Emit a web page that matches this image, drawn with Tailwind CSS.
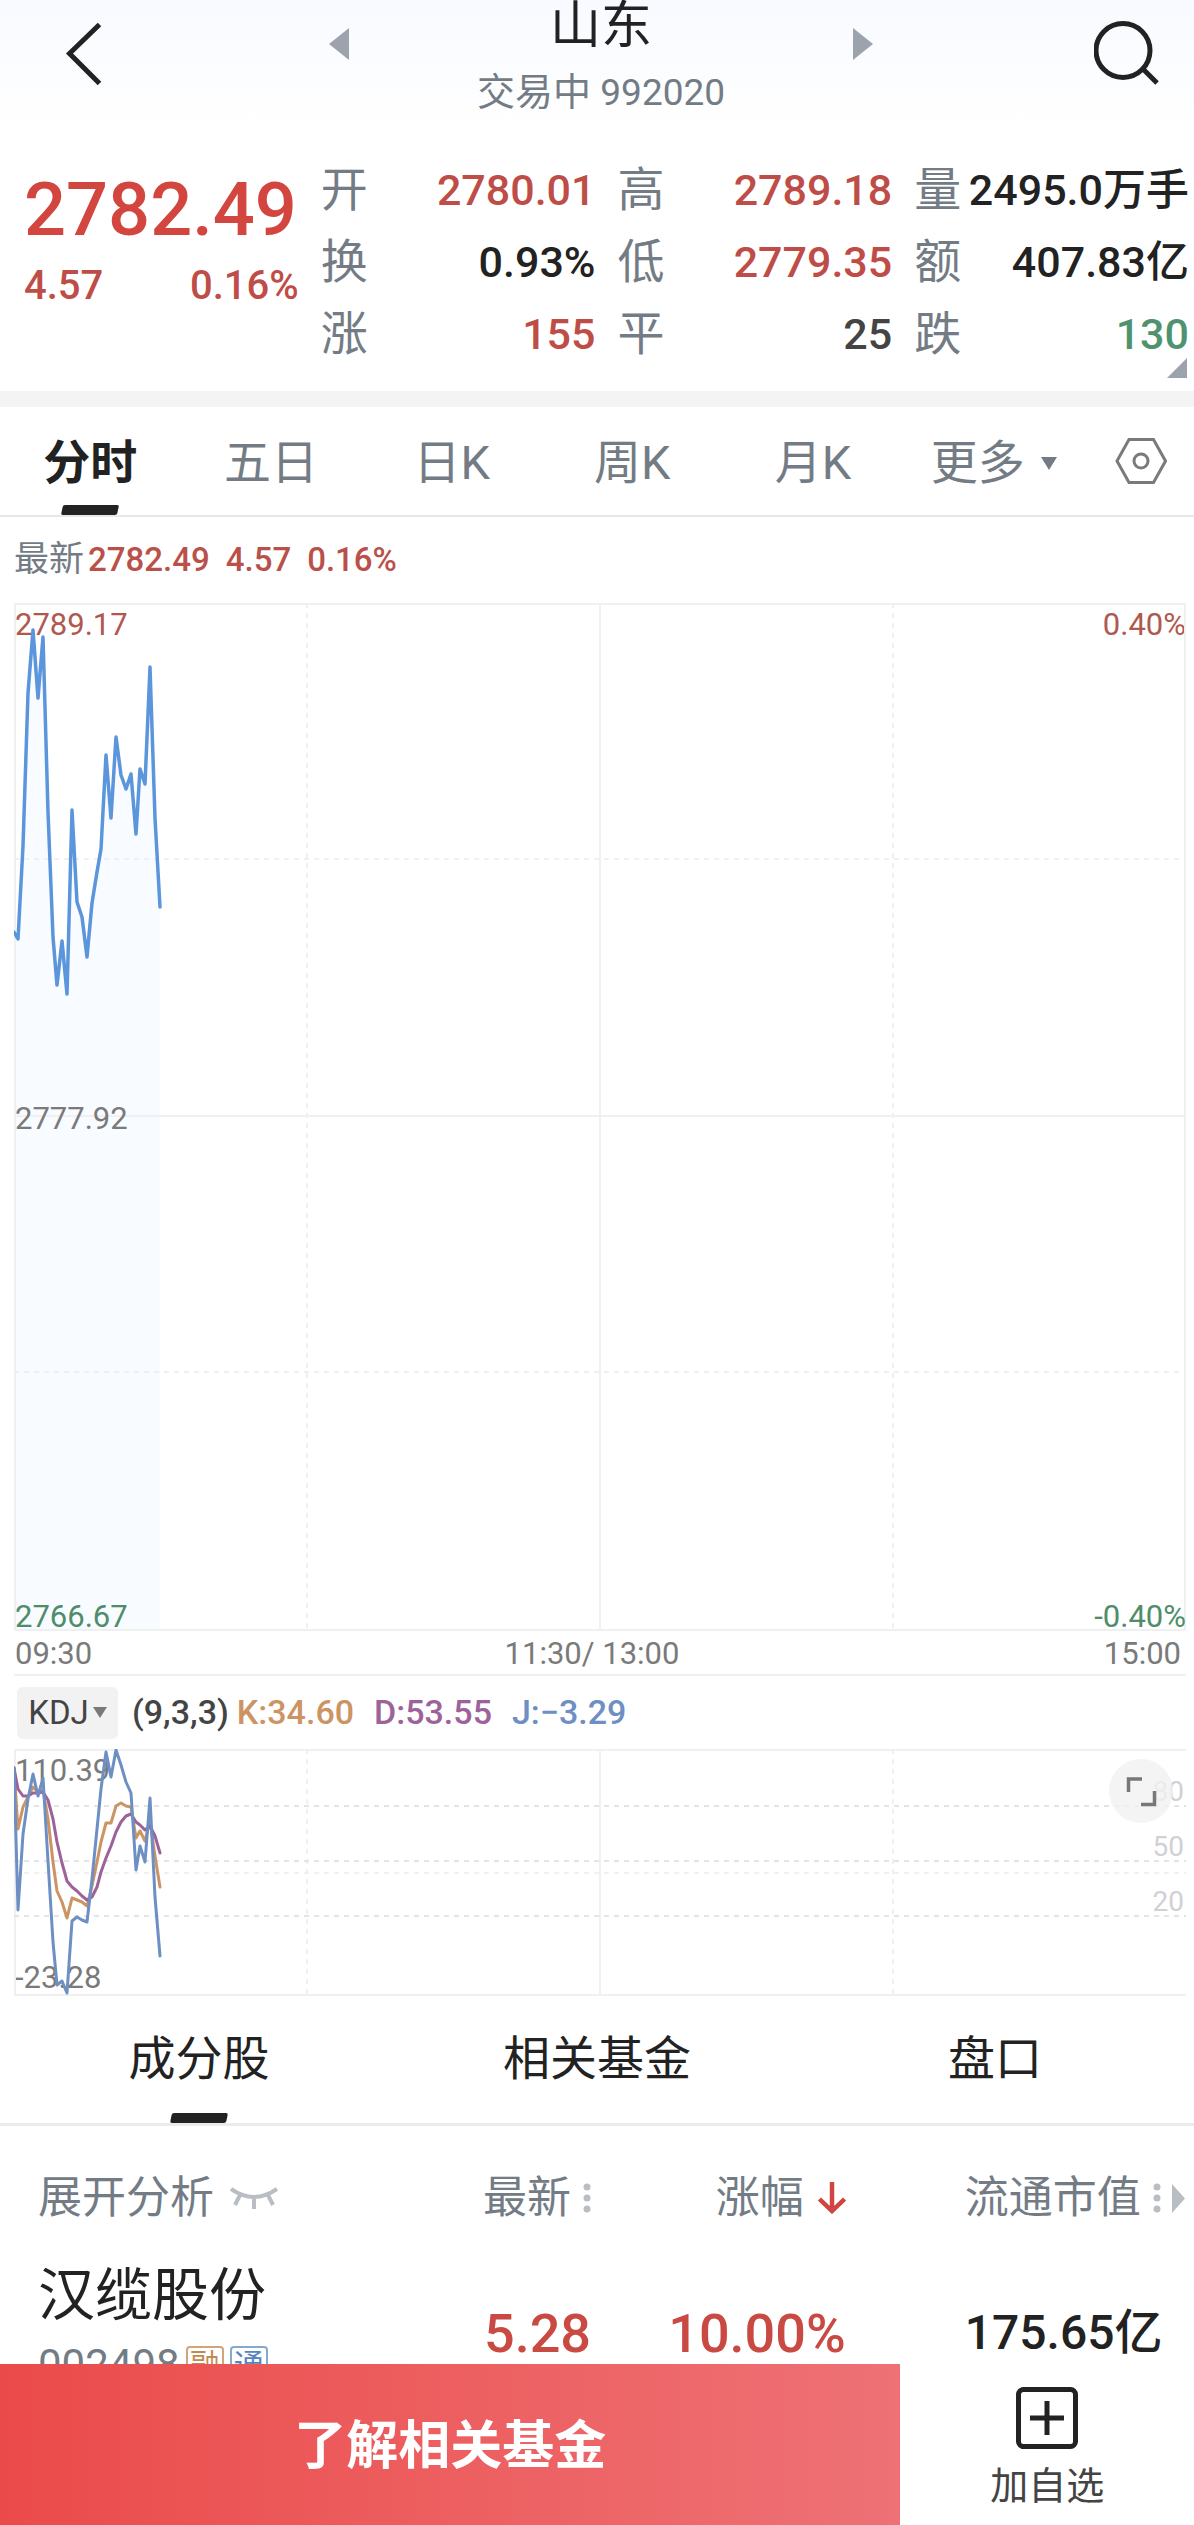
<!DOCTYPE html>
<html lang="zh-CN">
<head>
    <meta charset="UTF-8">
    <meta name="viewport" content="width=device-width, initial-scale=1.0">
    <title>山东 992020</title>
    <script src="https://cdn.jsdelivr.net/npm/@tailwindcss/browser@4"></script>
</head>
<body class="bg-white text-[#222] font-['Roboto','Noto_Sans_CJK_SC',sans-serif]">

    <!-- Header -->
    <header class="h-[130px] flex items-start justify-between bg-linear-to-b from-[#f8faff] to-white">
        <button aria-label="返回" class="ml-[60px] mt-[18px]">
            <svg class="w-12 h-[70px]" viewBox="0 0 48 70" fill="none" stroke="#222" stroke-width="5"><path d="M39.5 6.5 9.5 35.5 39.5 65.5"/></svg>
        </button>
        <div class="flex items-start">
            <button aria-label="上一个" class="mt-7">
                <svg class="w-5 h-8" viewBox="0 0 20 32" fill="#9da3ad"><path d="M20 0V32L0 16Z"/></svg>
            </button>
            <div class="w-[504px] text-center">
                <h1 class="text-[51px] leading-[52px]">山东</h1>
                <p class="mt-4 text-[38px] leading-12 text-[#737c85]">交易中 <span class="text-[37px]">992020</span></p>
            </div>
            <button aria-label="下一个" class="mt-7">
                <svg class="w-5 h-8" viewBox="0 0 20 32" fill="#9da3ad"><path d="M0 0V32L20 16Z"/></svg>
            </button>
        </div>
        <button aria-label="搜索" class="mr-[30px] mt-[18px]">
            <svg class="w-[70px] h-[70px]" viewBox="0 0 70 70" fill="none" stroke="#222" stroke-width="5"><circle cx="29" cy="32.500" r="27"/><path d="M49 51 63 65"/></svg>
        </button>
    </header>

    <!-- Quote -->
    <section class="relative grid grid-cols-4 gap-[22px] pl-6 pr-[5px] pt-6 pb-[21px] text-[43px] leading-[72px] font-medium whitespace-nowrap">
        <div class="pt-5 text-[#bf4d47]">
            <div class="text-[74px] text-[#d2463f]">2782.49</div>
            <div class="flex justify-between text-[40px] pt-1"><span>4.57</span><span>0.16%</span></div>
        </div>
        <dl>
            <div class="flex justify-between"><dt class="text-[47px] font-normal text-[#737c85]">开</dt><dd class="text-[#bf4d47]">2780.01</dd></div>
            <div class="flex justify-between"><dt class="text-[47px] font-normal text-[#737c85]">换</dt><dd>0.93%</dd></div>
            <div class="flex justify-between"><dt class="text-[47px] font-normal text-[#737c85]">涨</dt><dd class="text-[#bf4d47]">155</dd></div>
        </dl>
        <dl>
            <div class="flex justify-between"><dt class="text-[47px] font-normal text-[#737c85]">高</dt><dd class="text-[#bf4d47]">2789.18</dd></div>
            <div class="flex justify-between"><dt class="text-[47px] font-normal text-[#737c85]">低</dt><dd class="text-[#bf4d47]">2779.35</dd></div>
            <div class="flex justify-between"><dt class="text-[47px] font-normal text-[#737c85]">平</dt><dd class="text-[#444]">25</dd></div>
        </dl>
        <dl>
            <div class="flex justify-between"><dt class="text-[47px] font-normal text-[#737c85]">量</dt><dd>2495.0万手</dd></div>
            <div class="flex justify-between"><dt class="text-[47px] font-normal text-[#737c85]">额</dt><dd>407.83亿</dd></div>
            <div class="flex justify-between"><dt class="text-[47px] font-normal text-[#737c85]">跌</dt><dd class="text-[#4e936d]">130</dd></div>
        </dl>
        <svg class="absolute right-[7px] bottom-[13px] w-5 h-5" viewBox="0 0 20 20" fill="#9da3ad"><path d="M20 0V20H0Z"/></svg>
    </section>

    <div class="h-4 bg-[#f4f4f4]"></div>

    <!-- Period tabs -->
    <nav class="flex h-[110px] border-b-2 border-[#e8e8e8] text-[47px] text-[#737c85]">
        <button class="relative flex-1 pt-1 font-bold text-[#222]">分时
            <span class="absolute bottom-0 left-1/2 -translate-x-1/2 -skew-x-12 w-14 h-[10px] rounded-xs bg-[#222]"></span>
        </button>
        <button class="flex-1 pt-1">五日</button>
        <button class="flex-1 pt-1">日K</button>
        <button class="flex-1 pt-1">周K</button>
        <button class="flex-1 pt-1">月K</button>
        <button class="flex-1 flex items-center justify-center gap-4 pt-1 pr-1">更多
            <svg class="w-4 h-[13px]" viewBox="0 0 16 13" fill="#737c85"><path d="M0 0H16L8 13Z"/></svg>
        </button>
        <button aria-label="设置" class="w-[106px] flex items-center justify-center">
            <svg class="w-[52px] h-12" viewBox="0 0 52 48" fill="none" stroke="#7a7a7a" stroke-width="3"><path d="M14 2.500H38.500L50.500 24 38.500 45.500H14L2 24Z"/><circle cx="26" cy="24" r="7"/></svg>
        </button>
    </nav>

    <!-- Intraday chart -->
    <section class="pl-[14px] pr-2">
        <div class="flex items-center h-[86px] gap-4 text-[33px] font-medium text-[#b9504a]">
            <span><span class="text-[35px] font-normal text-[#737c85] mr-1">最新</span>2782.49</span><span>4.57</span><span>0.16%</span>
        </div>
        <div class="relative h-[1028px] text-[31px] leading-9 text-[#7a7a7a]">
            <span class="absolute top-1 left-px text-[#b05850]">2789.17</span>
            <span class="absolute top-1 right-0 text-[#b05850]">0.40%</span>
            <svg class="absolute inset-0 w-full h-full" viewBox="0 0 1172 1028" preserveAspectRatio="none" fill="none">
                <path fill="#f8fbff" d="M0 329 4 336 9 243 14 90 19 27 24 95 29 34 34 209 39 334 43 382 48 338 53 391 58 207 63 299 68 314 73 354 78 300 83 269 87 246 92 152 97 215 102 134 107 172 112 186 117 171 122 231 126 166 131 181 136 64 141 215 146 304V1028H0Z"/>
                <g stroke="#f0f0f0" stroke-width="2">
                    <path d="M0 1H1172M0 1027H1172M1 0V1028M1171 0V1028M0 513H1172M586 0V1028"/>
                    <path stroke-dasharray="5 5" d="M0 256H1172M0 769H1172M293 0V1028M879 0V1028"/>
                </g>
                <polyline stroke="#5b95db" stroke-width="3.500" stroke-linejoin="round" stroke-linecap="round" points="0,329 4,336 9,243 14,90 19,27 24,95 29,34 34,209 39,334 43,382 48,338 53,391 58,207 63,299 68,314 73,354 78,300 83,269 87,246 92,152 97,215 102,134 107,172 112,186 117,171 122,231 126,166 131,181 136,64 141,215 146,304"/>
            </svg>
            <span class="absolute top-[498px] left-px">2777.92</span>
            <span class="absolute -bottom-1 left-px text-[#4e8c6a]">2766.67</span>
            <span class="absolute -bottom-1 right-0 text-[#4e8c6a]">-0.40%</span>
        </div>
        <div class="grid grid-cols-3 items-center h-[45px] px-px border-b-2 border-[#f0f0f0] text-[31px] text-[#7a7a7a]">
            <span>09:30</span><span class="text-center pr-4">11:30/ 13:00</span><span class="text-right pr-1">15:00</span>
        </div>
    </section>

    <!-- KDJ indicator -->
    <section class="pl-[14px] pr-2">
        <div class="flex items-center h-[73px] pl-[3px] text-[34px] font-medium whitespace-nowrap">
            <button class="flex items-center justify-center w-[101px] h-[52px] mr-[14px] rounded-md bg-[#f2f2f2] text-[33px] font-normal text-[#444]">KDJ
                <svg class="ml-1 w-[14px] h-[11px]" viewBox="0 0 14 11" fill="#7a7a7a"><path d="M0 0H14L7 11Z"/></svg>
            </button>
            <span class="mr-2 text-[#444]">(9,3,3)</span>
            <span class="mr-5 text-[#cc9463]">K:34.60</span>
            <span class="mr-5 text-[#9b6399]">D:53.55</span>
            <span class="text-[#6d8fc4]">J:−3.29</span>
        </div>
        <div class="relative h-[247px] text-[31px] leading-9 text-[#7a7a7a]">
            <span class="absolute top-1 left-px">110.39</span>
            <span class="absolute bottom-0 left-px">-23.28</span>
            <span class="absolute top-[25px] right-[2px] text-[28px] text-[#cfd1d5]">80</span>
            <span class="absolute top-[80px] right-[2px] text-[28px] text-[#cfd1d5]">50</span>
            <span class="absolute top-[135px] right-[2px] text-[28px] text-[#cfd1d5]">20</span>
            <svg class="absolute inset-0 w-full h-full" viewBox="0 0 1172 247" preserveAspectRatio="none" fill="none">
                <g stroke="#f0f0f0" stroke-width="2">
                    <path d="M0 1H1172M0 246H1172M1 0V247M586 0V247"/>
                    <path stroke-dasharray="5 5" d="M0 124H1172M293 0V247M879 0V247"/>
                    <path stroke="#e4e4e4" stroke-dasharray="5 5" d="M0 57H1172M0 112H1172M0 167H1172"/>
                </g>
                <g stroke-width="3" stroke-linejoin="round" stroke-linecap="round">
                    <polyline stroke="#cc9463" points="0,19 4,80 9,58 14,48 19,38 24,43 29,41 34,70 39,113 43,142 48,153 53,169 58,149 63,151 68,153 73,157 78,137 83,113 87,93 92,74 97,74 102,57 107,54 112,57 117,58 122,89 126,82 131,92 136,72 141,107 146,138"/>
                    <polyline stroke="#9b6399" points="0,19 4,40 9,47 14,47 19,44 24,44 29,43 34,51 39,70 43,93 48,114 53,132 58,138 63,142 68,147 73,151 78,148 83,138 87,123 92,109 97,97 102,83 107,73 112,67 117,65 122,73 126,76 131,81 136,77 141,87 146,104"/>
                    <polyline stroke="#6d8fc4" points="0,19 4,161 9,85 14,50 19,25 24,47 29,29 34,112 39,193 43,236 48,232 53,244 58,172 63,168 68,171 73,173 78,130 83,80 87,40 92,3 97,28 102,1 107,16 112,33 117,44 122,121 126,97 131,113 136,49 141,148 146,207"/>
                </g>
            </svg>
            <button aria-label="全屏" class="absolute top-[10px] right-[13px] w-16 h-16 rounded-full bg-[#f1f1f1]/80">
                <svg class="w-16 h-16" viewBox="0 0 64 64" fill="none" stroke="#777" stroke-width="3.500"><path d="M33 20H19.500V33M32 45.500H45.500V32"/></svg>
            </button>
        </div>
    </section>

    <!-- Content tabs -->
    <nav class="grid grid-cols-3 h-[130px] border-b-3 border-[#ebebeb] text-[47px]">
        <button class="relative">成分股
            <span class="absolute bottom-0 left-1/2 -translate-x-1/2 -skew-x-12 w-14 h-[10px] rounded-xs bg-[#222]"></span>
        </button>
        <button>相关基金</button>
        <button>盘口</button>
    </nav>

    <!-- Stocks -->
    <table class="w-full table-fixed whitespace-nowrap">
        <thead>
            <tr class="h-[144px] text-[44px] text-[#737c85]">
                <th class="w-[30%] pl-[38px] text-left font-normal">
                    <button class="flex items-center gap-4">展开分析
                        <svg class="w-12 h-6" viewBox="0 0 48 24" fill="none" stroke="#b9bec4" stroke-width="4"><path d="M1 3Q24 19 47 3M10 9 5 19M24 11V23M38 9 43 19"/></svg>
                    </button>
                </th>
                <th class="w-[19.500%] font-normal">
                    <button class="flex items-center gap-3 ml-auto">最新
                        <svg class="w-2 h-[30px]" viewBox="0 0 8 30" fill="#b9bec4"><circle cx="4" cy="4" r="3.500"/><circle cx="4" cy="15" r="3.500"/><circle cx="4" cy="26" r="3.500"/></svg>
                    </button>
                </th>
                <th class="w-[21.500%] pr-[2px] font-normal">
                    <button class="flex items-center gap-[14px] ml-auto">涨幅
                        <svg class="w-7 h-8" viewBox="0 0 28 32" fill="none" stroke="#cf453f" stroke-width="4.500"><path d="M14 0V29M1.500 17 14 29 26.500 17"/></svg>
                    </button>
                </th>
                <th class="pl-[117px] font-normal">
                    <button class="flex items-center gap-3">流通市值
                        <svg class="w-8 h-[30px]" viewBox="0 0 32 30" fill="#b9bec4"><circle cx="4" cy="4" r="3.500"/><circle cx="4" cy="15" r="3.500"/><circle cx="4" cy="26" r="3.500"/><path d="M19 1V30L32 15.500Z"/></svg>
                    </button>
                </th>
            </tr>
        </thead>
        <tbody>
            <tr class="h-[126px] text-[54px] font-medium">
                <td class="pl-[38px] align-top">
                    <a href="#" class="block text-[57px] leading-[52px] font-normal">汉缆股份</a>
                    <div class="flex items-center gap-[6px] mt-[18px] text-[42px] leading-[50px] font-normal text-[#737c85]">002498
                        <span class="w-[38px] h-[38px] rounded-sm border-2 border-[#cfa67a] text-[30px] leading-[34px] text-center text-[#c28a50]">融</span>
                        <span class="w-[38px] h-[38px] rounded-sm border-2 border-[#86a9cf] text-[30px] leading-[34px] text-center text-[#5585c0]">通</span>
                    </div>
                </td>
                <td class="text-right text-[#c94a43]">5.28</td>
                <td class="pr-[2px] text-right text-[#c94a43]">10.00%</td>
                <td class="pl-[117px] text-[48px]">175.65亿</td>
            </tr>
        </tbody>
    </table>

    <!-- Bottom bar -->
    <footer class="fixed inset-x-0 bottom-0 flex h-[161px] bg-white">
        <button class="w-[75.400%] pt-1 bg-linear-to-r from-[#eb4a4a] to-[#ee7175] text-[52px] font-bold text-white">了解相关基金</button>
        <button class="flex-1 flex flex-col items-center pt-[23px] text-[38px] leading-[46px] text-[#444]">
            <svg class="w-[62px] h-[62px] mb-[14px]" viewBox="0 0 62 62" fill="none" stroke="#222" stroke-width="5"><rect x="2.500" y="2.500" width="57" height="57" rx="5"/><path d="M31 14V48M14 31H48"/></svg>
            加自选
        </button>
    </footer>
</body>
</html>
